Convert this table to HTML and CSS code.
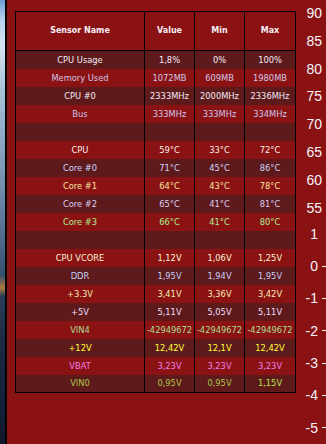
FILE: index.html
```html
<!DOCTYPE html>
<html>
<head>
<meta charset="utf-8">
<link rel="stylesheet" href="styles.css">
</head>
<body>
<div class="desk">
  <div class="wall"></div>
  <div class="win">
    <div class="table">
      <div class="row head">
        <div class="c">Sensor Name</div><div class="c">Value</div><div class="c">Min</div><div class="c">Max</div>
      </div>
      <div class="body">
        <div class="row k-w"><div class="c">CPU Usage</div><div class="c">1,8%</div><div class="c">0%</div><div class="c">100%</div></div>
        <div class="row k-lav"><div class="c">Memory Used</div><div class="c">1072MB</div><div class="c">609MB</div><div class="c">1980MB</div></div>
        <div class="row k-w"><div class="c">CPU #0</div><div class="c">2333MHz</div><div class="c">2000MHz</div><div class="c">2336MHz</div></div>
        <div class="row k-bus"><div class="c">Bus</div><div class="c">333MHz</div><div class="c">333MHz</div><div class="c">334MHz</div></div>
        <div class="row"><div class="c"></div><div class="c"></div><div class="c"></div><div class="c"></div></div>
        <div class="row k-cpu"><div class="c">CPU</div><div class="c">59°C</div><div class="c">33°C</div><div class="c">72°C</div></div>
        <div class="row k-core0"><div class="c">Core #0</div><div class="c">71°C</div><div class="c">45°C</div><div class="c">86°C</div></div>
        <div class="row k-core1"><div class="c">Core #1</div><div class="c">64°C</div><div class="c">43°C</div><div class="c">78°C</div></div>
        <div class="row k-core2"><div class="c">Core #2</div><div class="c">65°C</div><div class="c">41°C</div><div class="c">81°C</div></div>
        <div class="row k-core3"><div class="c">Core #3</div><div class="c">66°C</div><div class="c">41°C</div><div class="c">80°C</div></div>
        <div class="row"><div class="c"></div><div class="c"></div><div class="c"></div><div class="c"></div></div>
        <div class="row k-vcore"><div class="c">CPU VCORE</div><div class="c">1,12V</div><div class="c">1,06V</div><div class="c">1,25V</div></div>
        <div class="row k-ddr"><div class="c">DDR</div><div class="c">1,95V</div><div class="c">1,94V</div><div class="c">1,95V</div></div>
        <div class="row k-v33"><div class="c">+3.3V</div><div class="c">3,41V</div><div class="c">3,36V</div><div class="c">3,42V</div></div>
        <div class="row k-v5"><div class="c">+5V</div><div class="c">5,11V</div><div class="c">5,05V</div><div class="c">5,11V</div></div>
        <div class="row k-vin4"><div class="c">VIN4</div><div class="c">-42949672</div><div class="c">-42949672</div><div class="c">-42949672</div></div>
        <div class="row k-v12"><div class="c">+12V</div><div class="c">12,42V</div><div class="c">12,1V</div><div class="c">12,42V</div></div>
        <div class="row k-vbat"><div class="c">VBAT</div><div class="c">3,23V</div><div class="c">3,23V</div><div class="c">3,23V</div></div>
        <div class="row k-vin0 last"><div class="c">VIN0</div><div class="c">0,95V</div><div class="c">0,95V</div><div class="c hi">1,15V</div></div>
      </div>
    </div>
    <div class="axes">
      <div class="axis upper">
        <div class="lbl">90</div><div class="lbl">85</div><div class="lbl">80</div><div class="lbl">75</div>
        <div class="lbl">70</div><div class="lbl">65</div><div class="lbl">60</div><div class="lbl">55</div>
      </div>
      <div class="axis lower">
        <div class="tk"><span class="num">1</span><span class="tick off"></span></div>
        <div class="tk"><span class="num">0</span><span class="tick"></span></div>
        <div class="tk"><span class="num">-1</span><span class="tick"></span></div>
        <div class="tk"><span class="num">-2</span><span class="tick"></span></div>
        <div class="tk"><span class="num">-3</span><span class="tick"></span></div>
        <div class="tk"><span class="num">-4</span><span class="tick"></span></div>
        <div class="tk"><span class="num">-5</span><span class="tick"></span></div>
      </div>
    </div>
  </div>
</div>
</body>
</html>
```
FILE: styles.css
```css
html, body {
  margin: 0;
  padding: 0;
  width: 326px;
  height: 444px;
  overflow: hidden;
  background: #121a2c;
}
.desk {
  display: flex;
  align-items: flex-start;
  width: 326px;
  height: 444px;
  background: #141c30;
}
.wall {
  width: 5px;
  height: 444px;
  flex: none;
  background: linear-gradient(to bottom,
    #6f9ed8 0px, #b9d3ee 20px, #d6e4f2 45px, #a9c1d8 90px, #8ea8c4 140px,
    #6f8cab 190px, #4d6a8c 240px, #34506e 275px, #b07a3a 288px, #2a3c58 296px,
    #1c2a44 340px, #15203a 400px, #10182a 444px);
}
.win {
  flex: 1;
  height: 441px;
  display: flex;
  align-items: flex-start;
  background: #8b1212;
  border-left: 2px solid #000;
  border-bottom: 2px solid #000;
  padding: 11px 0 0 8px;
  box-sizing: content-box;
}
.table {
  width: 279px;
  flex: none;
  border: 1px solid #000;
  font-family: "DejaVu Sans", Verdana, sans-serif;
  font-size: 8.3px;
  color: #f0eaf6;
}
.row {
  display: grid;
  grid-template-columns: 128px 50px 50px 51px;
  height: 18px;
  line-height: 18px;
}
.row .c {
  text-align: center;
  white-space: nowrap;
  overflow: visible;
}
.row .c + .c {
  border-left: 1px solid #000;
}
.head {
  height: 38px;
  line-height: 38px;
  font-weight: bold;
  font-size: 8px;
  border-bottom: 1px solid #000;
  color: #f4eef6;
}
.body .row:nth-child(odd) {
  background: #5e1a1b;
}
.body .row.last {
  height: 17px;
  line-height: 17px;
}
.k-w { color: #f0eaf6; }
.k-lav { color: #d0c8e8; }
.k-bus { color: #ccc4ee; }
.k-cpu { color: #faeee8; }
.k-core0 { color: #ccd4fc; }
.k-core1 { color: #f6e6a4; }
.k-core2 { color: #d8cef6; }
.k-core3 { color: #acee96; }
.k-vcore { color: #fcf2d8; }
.k-ddr { color: #c0cff6; }
.k-v33 { color: #f8eab4; }
.k-v5 { color: #ecdefc; }
.k-vin4 { color: #a8de96; }
.k-v12 { color: #ffff34; }
.k-vbat { color: #ee7eec; }
.k-vin0 { color: #acc44a; }
.k-vin0 .hi { color: #b4e44c; }

.axes {
  flex: 1;
  display: grid;
  margin-top: -11px;
  font-family: "Liberation Sans", Arial, sans-serif;
  font-size: 14px;
  color: #f4f2fa;
}
.axis {
  grid-area: 1 / 1;
  display: flex;
  flex-direction: column;
}
.upper {
  padding-right: 4px;
  text-align: right;
}
.upper .lbl {
  height: 27.8px;
  line-height: 27.8px;
}
.lower {
  padding-top: 217.7px;
}
.tk {
  height: 32.3px;
  display: flex;
  align-items: center;
  justify-content: flex-end;
  gap: 4px;
}
.tick {
  width: 4px;
  height: 1px;
  background: #f4f2fa;
}
.tick.off {
  visibility: hidden;
}
```
